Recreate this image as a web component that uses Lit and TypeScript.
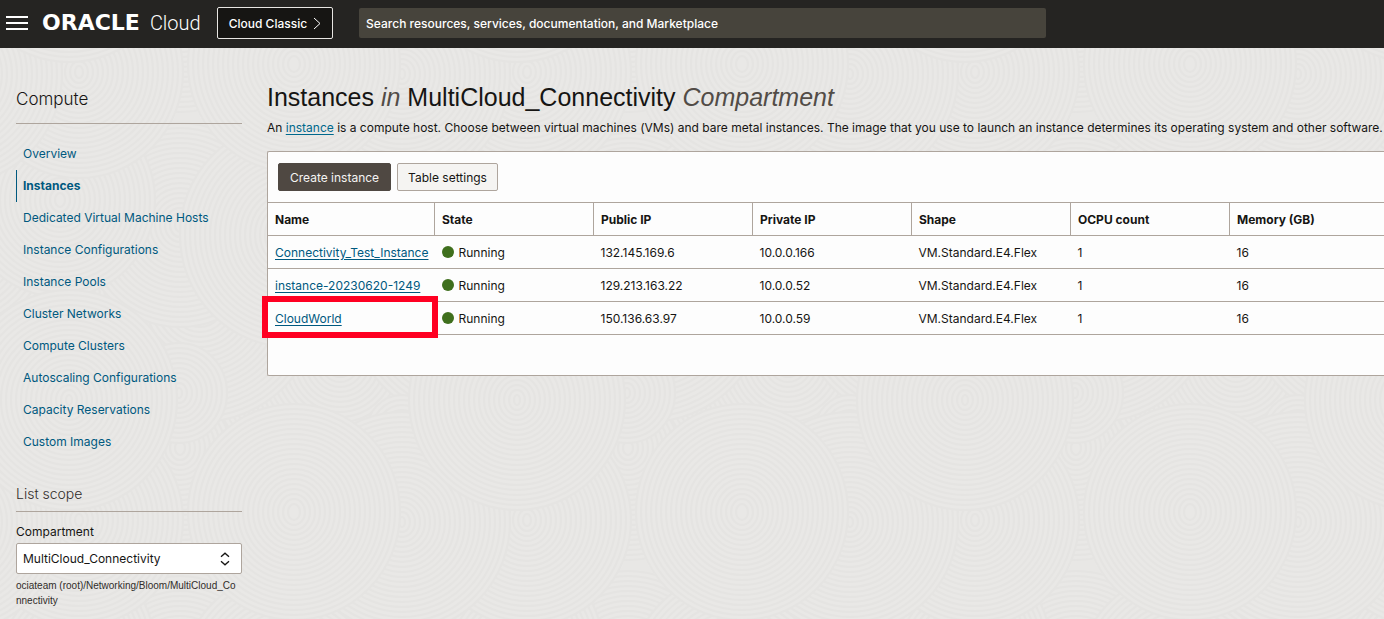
import { LitElement, html, css, svg } from "lit";
import { customElement, state } from "lit/decorators.js";

interface Instance {
  name: string;
  publicIp: string;
  privateIp: string;
  shape: string;
  ocpu: number;
  memory: number;
  marked?: boolean;
}

const SERVICES = [
  "Overview",
  "Instances",
  "Dedicated Virtual Machine Hosts",
  "Instance Configurations",
  "Instance Pools",
  "Cluster Networks",
  "Compute Clusters",
  "Autoscaling Configurations",
  "Capacity Reservations",
  "Custom Images",
];

const COLUMNS = ["Name", "State", "Public IP", "Private IP", "Shape", "OCPU count", "Memory (GB)"];

const INSTANCES: Instance[] = [
  { name: "Connectivity_Test_Instance", publicIp: "132.145.169.6", privateIp: "10.0.0.166", shape: "VM.Standard.E4.Flex", ocpu: 1, memory: 16 },
  { name: "instance-20230620-1249", publicIp: "129.213.163.22", privateIp: "10.0.0.52", shape: "VM.Standard.E4.Flex", ocpu: 1, memory: 16 },
  { name: "CloudWorld", publicIp: "150.136.63.97", privateIp: "10.0.0.59", shape: "VM.Standard.E4.Flex", ocpu: 1, memory: 16, marked: true },
];

const TILE = 448;

// Swirls of the raked-sand texture: centre x, centre y, radius. Later ones cover earlier ones.
const SWIRLS: [number, number, number][] = [
  [180, 0, 110],
  [340, 360, 130],
  [200, 300, 120],
  [20, 300, 120],
  [400, 230, 120],
  [180, 225, 100],
  [290, 235, 110],
  [60, 200, 95],
  [179, 393, 48],
  [402, 433, 36],
  [79, 72, 104],
  [402, 74, 108],
  [294, 64, 106],
  [69, 400, 108],
];

function rings([cx, cy, radius]: [number, number, number]) {
  const out = [];
  for (let r = radius; r > 2; r -= 5) {
    out.push(svg`<ellipse cx=${cx} cy=${cy} rx=${r} ry=${r + 2} />`);
  }
  return out;
}

@customElement("sand-texture")
class SandTexture extends LitElement {
  static styles = css`
    :host { display: block; background: #e8e7e5; }
    svg { display: block; width: 100%; height: 100%; }
    .rings { fill: #e9e8e6; stroke: #e5e4e2; stroke-width: 2; }
  `;
  render() {
    const shifts = [-TILE, 0, TILE];
    return html`<svg aria-hidden="true">
      <defs>
        <pattern id="sand" width=${TILE} height=${TILE} x="0" y="-48" patternUnits="userSpaceOnUse">
          <g class="rings">
            ${SWIRLS.map((s) => shifts.map((dx) => shifts.map((dy) => svg`<g transform="translate(${dx} ${dy})">${rings(s)}</g>`)))}
          </g>
        </pattern>
      </defs>
      <rect width="100%" height="100%" fill="url(#sand)" />
    </svg>`;
  }
}

@customElement("console-header")
class ConsoleHeader extends LitElement {
  static styles = css`
    :host {
      display: flex;
      align-items: center;
      height: 46px;
      padding: 0 6px 2px;
      background: #252422;
      color: #fff;
      font-family: Inter, "Liberation Sans", sans-serif;
    }
    button, input { font: inherit; color: inherit; box-sizing: border-box; margin: 0; }
    .menu { display: flex; width: 22px; padding: 0; border: 0; background: none; }
    .brand { display: flex; align-items: baseline; padding: 0 16px 0 14px; gap: 10px; line-height: 24px; color: #fff; text-decoration: none; }
    .oracle { font: 700 22px/24px "DejaVu Sans", sans-serif; }
    .cloud { font: 300 20px/24px Roboto, sans-serif; }
    .classic {
      display: flex; align-items: center; gap: 6px;
      height: 32px; padding: 0 11px;
      border: 1px solid #e8e6e3; border-radius: 2px; background: #161513;
      font-size: 12px; font-weight: 500; white-space: nowrap;
    }
    .search { flex: 0 1 687px; height: 30px; margin-left: 26px; padding: 0 7px; border: 0; border-radius: 2px; background: #47443c; font-size: 12px; font-weight: 500; }
    .search::placeholder { color: #fff; opacity: 1; }
  `;
  render() {
    return html`
      <button class="menu" aria-label="Navigation menu">
        <svg width="22" height="14" viewBox="0 0 22 14"><path d="M0 1h22M0 7h22M0 13h22" stroke="#fff" stroke-width="2" /></svg>
      </button>
      <a class="brand" href="#"><span class="oracle">ORACLE</span><span class="cloud">Cloud</span></a>
      <button class="classic">
        Cloud Classic
        <svg width="8" height="13" viewBox="0 0 8 13"><path d="M1 1l6 5.500-6 5.500" fill="none" stroke="#fff" stroke-width="1" /></svg>
      </button>
      <input class="search" type="search" aria-label="Search" placeholder="Search resources, services, documentation, and Marketplace" />
    `;
  }
}

@customElement("compute-sidebar")
class ComputeSidebar extends LitElement {
  @state() private current = "Instances";

  static styles = css`
    :host { display: block; font-size: 12px; }
    h2 { margin: 0; border-bottom: 1px solid #aea59d; font-weight: 300; color: #161513; }
    .service { font-size: 17px; line-height: 24px; padding: 39px 0 12px; }
    .scope { font-size: 14px; line-height: 20px; padding-bottom: 7px; color: #312d2a; }
    ul { list-style: none; margin: 14px 0 26px; padding: 0; }
    li a { display: block; padding-left: 7px; line-height: 32px; color: #00597f; text-decoration: none; }
    li a.current { padding-left: 6px; border-left: 1px solid #00597f; font-weight: 700; }
    label { display: block; margin-top: 12px; line-height: 16px; color: #161513; }
    .field { display: grid; align-items: center; margin-top: 3px; }
    .field > * { grid-area: 1 / 1; }
    select {
      appearance: none; width: 100%; height: 31px; box-sizing: border-box; padding: 0 6px;
      border: 1px solid #aea59d; border-radius: 2px; background: #fff; color: #161513; font: inherit;
    }
    .arrows { justify-self: end; margin-right: 12px; pointer-events: none; }
    .path { margin: 4px 0 0; padding-right: 4px; font: 10px/15px "Liberation Sans", Arial, sans-serif; color: #312d2a; word-break: break-all; }
  `;
  render() {
    return html`
      <h2 class="service">Compute</h2>
      <ul>
        ${SERVICES.map((s) => html`<li><a href="#" class=${s === this.current ? "current" : ""}>${s}</a></li>`)}
      </ul>
      <h2 class="scope">List scope</h2>
      <label for="compartment">Compartment</label>
      <div class="field">
        <select id="compartment"><option>MultiCloud_Connectivity</option></select>
        <svg class="arrows" width="10" height="14" viewBox="0 0 10 14"><path d="M1 4.800L5 1.200l4 3.600M1 9.200l4 3.600 4-3.600" fill="none" stroke="#161513" stroke-width="1.300" /></svg>
      </div>
      <p class="path">ociateam (root)/Networking/Bloom/MultiCloud_Connectivity</p>
    `;
  }
}

@customElement("instance-table")
class InstanceTable extends LitElement {
  static styles = css`
    :host { display: block; font-size: 12px; color: #161513; background: #fdfdfd; border: 1px solid #aea59d; border-right: 0; border-radius: 2px 0 0 2px; padding-bottom: 40px; }
    .actions { display: flex; gap: 6px; padding: 11px 10px; }
    button { height: 28px; padding: 0 10px; border: 1px solid #aea59d; border-radius: 2px; background: #f5f4f2; color: #161513; font: inherit; }
    button.primary { padding: 0 11px; border-color: #4f4842; background: #4f4842; color: #f5f4f2; }
    table { width: 100%; border-collapse: collapse; table-layout: fixed; }
    th, td { height: 32px; padding: 0 7px; text-align: left; white-space: nowrap; border-bottom: 1px solid #aea59d; }
    th { border-top: 1px solid #aea59d; }
    th + th { border-left: 1px solid #aea59d; }
    .name { width: 152px; }
    .memory { width: 140px; }
    a { color: #00597f; text-underline-offset: 2px; }
    .state { display: flex; align-items: center; gap: 5px; }
    .dot { width: 12px; height: 12px; border-radius: 50%; background: #3f6f1d; }
    .marked { position: relative; }
    .frame { position: absolute; inset: -6px -3px -4px -6px; border: 6px solid #ff0022; pointer-events: none; }
  `;
  render() {
    return html`
      <div class="actions">
        <button class="primary">Create instance</button>
        <button>Table settings</button>
      </div>
      <table>
        <thead>
          <tr>${COLUMNS.map((c, i) => html`<th scope="col" class=${i === 0 ? "name" : i === 6 ? "memory" : ""}>${c}</th>`)}</tr>
        </thead>
        <tbody>
          ${INSTANCES.map((r) => html`<tr>
            <td class=${r.marked ? "marked" : ""}><a href="#">${r.name}</a>${r.marked ? html`<span class="frame"></span>` : ""}</td>
            <td><span class="state"><span class="dot"></span>Running</span></td>
            <td>${r.publicIp}</td>
            <td>${r.privateIp}</td>
            <td>${r.shape}</td>
            <td>${r.ocpu}</td>
            <td>${r.memory}</td>
          </tr>`)}
        </tbody>
      </table>
    `;
  }
}

@customElement("app-root")
class AppRoot extends LitElement {
  static styles = css`
    :host { display: block; overflow: hidden; font-family: Inter, "Liberation Sans", Arial, sans-serif; }
    .body { display: grid; grid-template-columns: 226px minmax(0, 1fr); column-gap: 25px; min-height: calc(100vh - 48px); padding-left: 16px; box-sizing: border-box; }
    .texture { grid-area: 1 / 1 / 2 / 3; margin-left: -16px; }
    .side { grid-area: 1 / 1; z-index: 1; }
    main { grid-area: 1 / 2; z-index: 1; padding-top: 33px; }
    h1 { margin: 0; font: 400 25px/32px "Liberation Sans", Arial, sans-serif; color: #161513; }
    h1 em { color: #524c47; }
    p { margin: 6px 0 14px; font-size: 12px; line-height: 18px; color: #161513; white-space: nowrap; }
    p a { color: #00688c; text-underline-offset: 2px; }
  `;
  render() {
    return html`
      <console-header></console-header>
      <div class="body">
        <sand-texture class="texture"></sand-texture>
        <compute-sidebar class="side"></compute-sidebar>
        <main>
          <h1>Instances <em>in</em> MultiCloud_Connectivity <em>Compartment</em></h1>
          <p>An <a href="#">instance</a> is a compute host. Choose between virtual machines (VMs) and bare metal instances. The image that you use to launch an instance determines its operating system and other software.</p>
          <instance-table></instance-table>
        </main>
      </div>
    `;
  }
}
